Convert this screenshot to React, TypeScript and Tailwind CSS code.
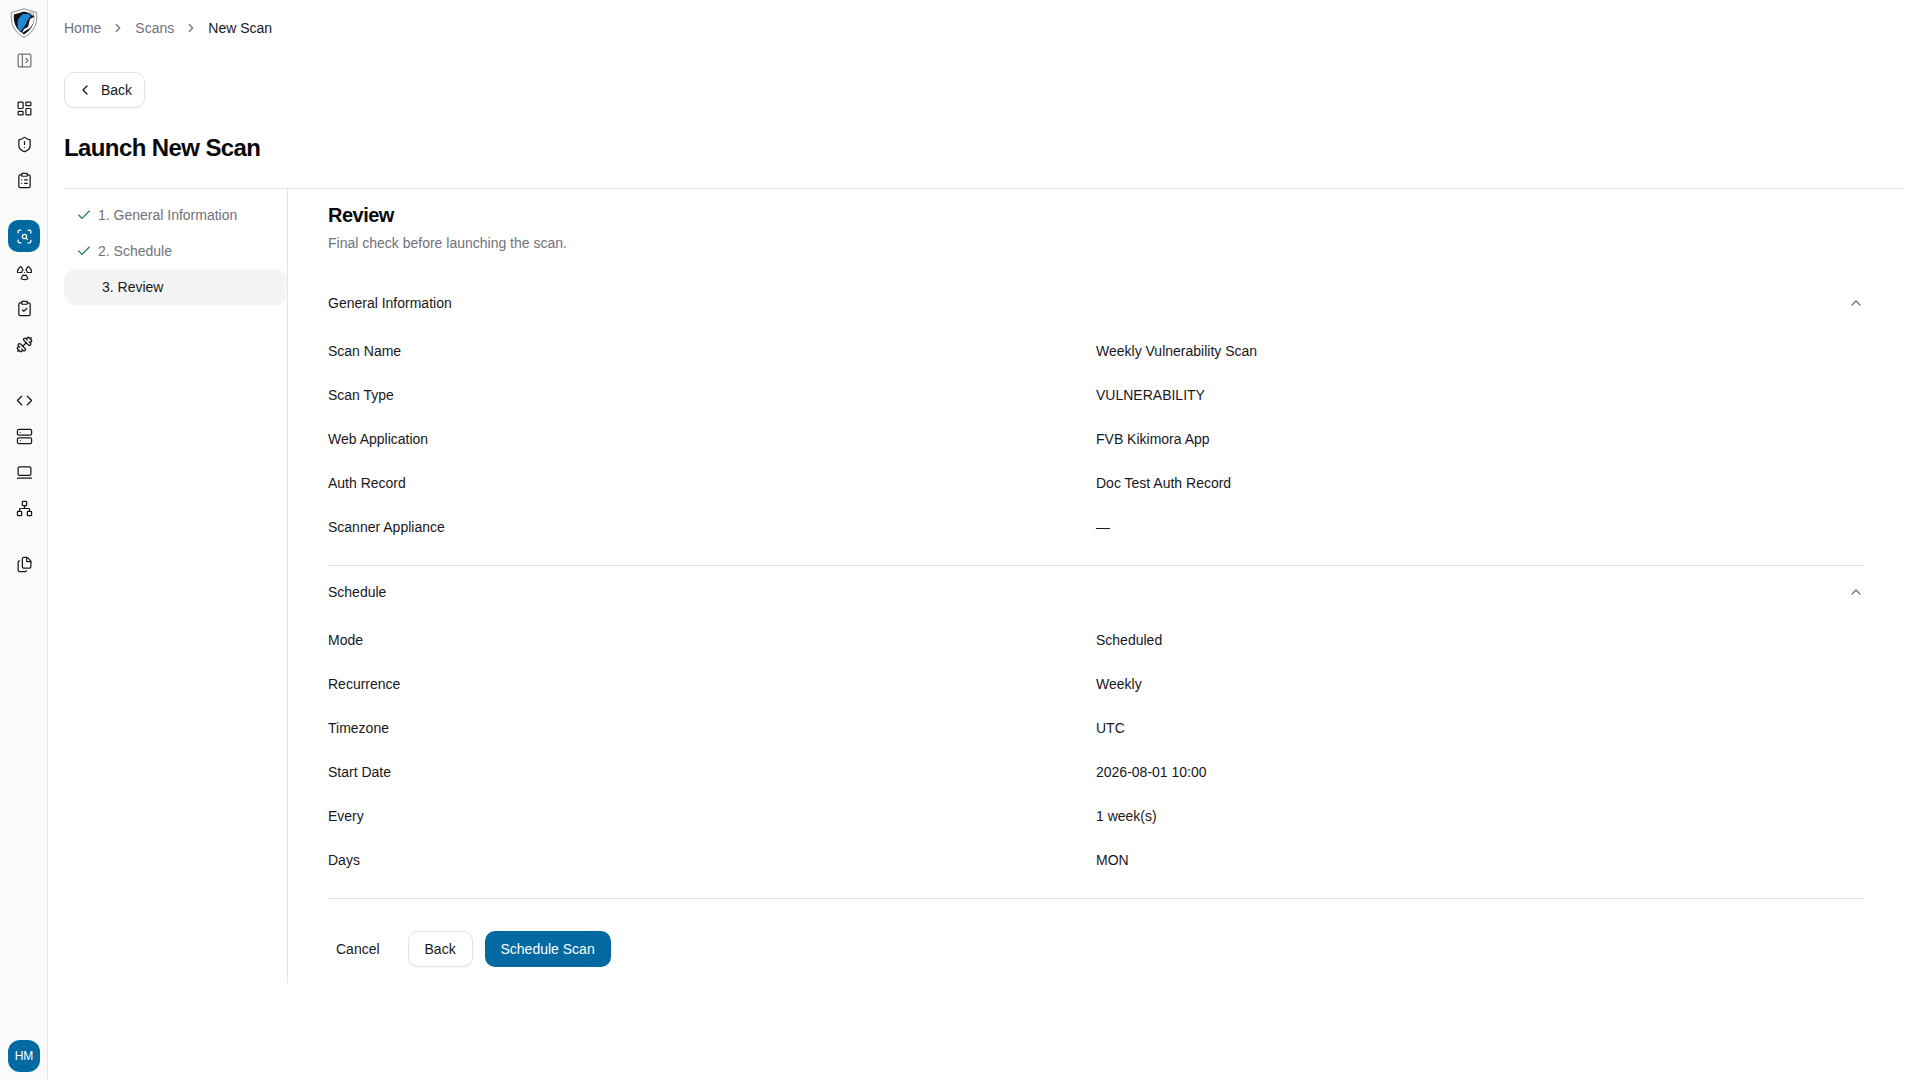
import {
  Check,
  ChevronLeft,
  ChevronRight,
  ChevronUp,
  ClipboardCheck,
  ClipboardList,
  Code,
  Dumbbell,
  Files,
  LaptopMinimal,
  LayoutDashboard,
  Network,
  PanelLeftOpen,
  Radiation,
  ScanSearch,
  Server,
  ShieldAlert,
} from 'lucide-react'

const general = [
  ['Scan Name', 'Weekly Vulnerability Scan'],
  ['Scan Type', 'VULNERABILITY'],
  ['Web Application', 'FVB Kikimora App'],
  ['Auth Record', 'Doc Test Auth Record'],
  ['Scanner Appliance', '—'],
]

const schedule = [
  ['Mode', 'Scheduled'],
  ['Recurrence', 'Weekly'],
  ['Timezone', 'UTC'],
  ['Start Date', '2026-08-01 10:00'],
  ['Every', '1 week(s)'],
  ['Days', 'MON'],
]

function Logo() {
  return (
    <svg width="28" height="30" viewBox="0 0 28 30" className="mb-[2px]">
      <path d="M14 .8 L26.5 4.5 C27.5 13 26 23 14 29.5 C2 23 .5 13 1.5 4.5 Z" fill="#fff" stroke="#6b7280" strokeWidth=".8" />
      <path d="M14 3.5 L24 6.5 C25 13 23 21 14 26.5 C5 21 3 13 4 6.5 Z" fill="#0f1218" />
      <path d="M13 6 L18.5 6 L21 8 C18 10 17 15 14 19 L10 24 C7 20 7 13 9 10 Z" fill="#1d87d2" />
      <path d="M20 11 L24 9 C24 13 23 17 20 20 L12 25 L14 21 L18 19 Z" fill="#fff" />
      <path d="M19 2.5 L25 4.5 L23 8 L20 6 Z" fill="#c3c8d0" />
    </svg>
  )
}

function SideIcon({ children, active }: { children: React.ReactNode; active?: boolean }) {
  return (
    <div
      className={
        active
          ? 'w-8 h-8 rounded-[10px] bg-[#0369a1] text-white flex items-center justify-center'
          : 'w-8 h-8 text-[#18181b] flex items-center justify-center'
      }
    >
      {children}
    </div>
  )
}

function Section({ title, rows }: { title: string; rows: string[][] }) {
  return (
    <div>
      <div className="h-[52px] flex items-center justify-between">
        <span className="text-[#18181b]">{title}</span>
        <ChevronUp className="w-4 h-4 text-[#71717a]" strokeWidth={2} />
      </div>
      <div className="grid grid-cols-2">
        {rows.map(([label, value]) => (
          <div key={label} className="contents">
            <div className="h-11 flex items-center text-[#18181b]">{label}</div>
            <div className="h-11 flex items-center text-[#18181b]">{value}</div>
          </div>
        ))}
      </div>
    </div>
  )
}

export default function App() {
  return (
    <div className="flex min-h-screen bg-white text-sm font-['Liberation_Sans',Arial,sans-serif]">
      <aside className="w-12 shrink-0 bg-[#fafafa] border-r border-[#e4e4e7] flex flex-col items-center pl-px pt-2 pb-2">
        <Logo />
        <div className="mt-[4px]">
          <SideIcon>
            <PanelLeftOpen size={17} strokeWidth={1.75} className="text-[#71717a]" />
          </SideIcon>
        </div>
        <div className="mt-4 flex flex-col items-center gap-1">
          <SideIcon><LayoutDashboard size={17} strokeWidth={1.75} /></SideIcon>
          <SideIcon><ShieldAlert size={17} strokeWidth={1.75} /></SideIcon>
          <SideIcon><ClipboardList size={17} strokeWidth={1.75} /></SideIcon>
        </div>
        <div className="mt-6 flex flex-col items-center gap-1">
          <SideIcon active><ScanSearch size={17} strokeWidth={1.75} /></SideIcon>
          <SideIcon><Radiation size={17} strokeWidth={1.75} /></SideIcon>
          <SideIcon><ClipboardCheck size={17} strokeWidth={1.75} /></SideIcon>
          <SideIcon><Dumbbell size={17} strokeWidth={1.75} /></SideIcon>
        </div>
        <div className="mt-6 flex flex-col items-center gap-1">
          <SideIcon><Code size={17} strokeWidth={1.75} /></SideIcon>
          <SideIcon><Server size={17} strokeWidth={1.75} /></SideIcon>
          <SideIcon><LaptopMinimal size={17} strokeWidth={1.75} /></SideIcon>
          <SideIcon><Network size={17} strokeWidth={1.75} /></SideIcon>
        </div>
        <div className="mt-6">
          <SideIcon><Files size={17} strokeWidth={1.75} /></SideIcon>
        </div>
        <div className="mt-auto w-8 h-8 rounded-[12px] bg-[#0369a1] text-white text-xs flex items-center justify-center">
          HM
        </div>
      </aside>

      <main className="flex-1 min-w-0 px-4">
        <nav className="h-14 flex items-center gap-2 text-[#71717a]">
          <span>Home</span>
          <ChevronRight className="w-3.5 h-3.5 mx-[2px]" />
          <span>Scans</span>
          <ChevronRight className="w-3.5 h-3.5 mx-[2px]" />
          <span className="text-[#18181b]">New Scan</span>
        </nav>

        <button className="mt-4 h-9 w-[81px] rounded-[10px] border border-[#e4e4e7] bg-white shadow-xs flex items-center justify-center gap-2 text-[#18181b]">
          <ChevronLeft className="w-4 h-4" />
          Back
        </button>

        <h1 className="mt-6 h-8 leading-8 text-2xl font-bold tracking-tight text-[#09090b]">Launch New Scan</h1>

        <div className="mt-6 border-t border-[#e4e4e7] flex">
          <div className="w-[224px] shrink-0 border-r border-[#e4e4e7] pt-2">
            <div className="h-9 flex items-center pl-3 gap-1.5 text-[#71717a]">
              <Check className="w-4 h-4 text-[#15803d]" strokeWidth={1.75} />
              1. General Information
            </div>
            <div className="h-9 flex items-center pl-3 gap-1.5 text-[#71717a]">
              <Check className="w-4 h-4 text-[#15803d]" strokeWidth={1.75} />
              2. Schedule
            </div>
            <div className="h-9 flex items-center pl-[38px] rounded-xl bg-[#f4f4f5] text-[#18181b]">3. Review</div>
          </div>

          <div className="flex-1 min-w-0 px-10 pt-3 pb-4">
            <h2 className="text-xl leading-7 font-semibold tracking-tight text-[#09090b]">Review</h2>
            <p className="mt-1 text-[#71717a]">Final check before launching the scan.</p>
            <div className="mt-6">
              <Section title="General Information" rows={general} />
            </div>
            <div className="mt-4 border-t border-[#e4e4e7]">
              <Section title="Schedule" rows={schedule} />
            </div>
            <div className="mt-4 border-t border-[#e4e4e7] pt-8 flex items-center">
              <button className="h-9 px-2 text-[#18181b]">Cancel</button>
              <button className="ml-5 h-9 w-[65px] rounded-[10px] border border-[#e4e4e7] bg-white shadow-xs text-[#18181b]">Back</button>
              <button className="ml-3 h-9 w-[126px] rounded-[10px] bg-[#0369a1] text-white">Schedule Scan</button>
            </div>
          </div>
        </div>
      </main>
    </div>
  )
}
